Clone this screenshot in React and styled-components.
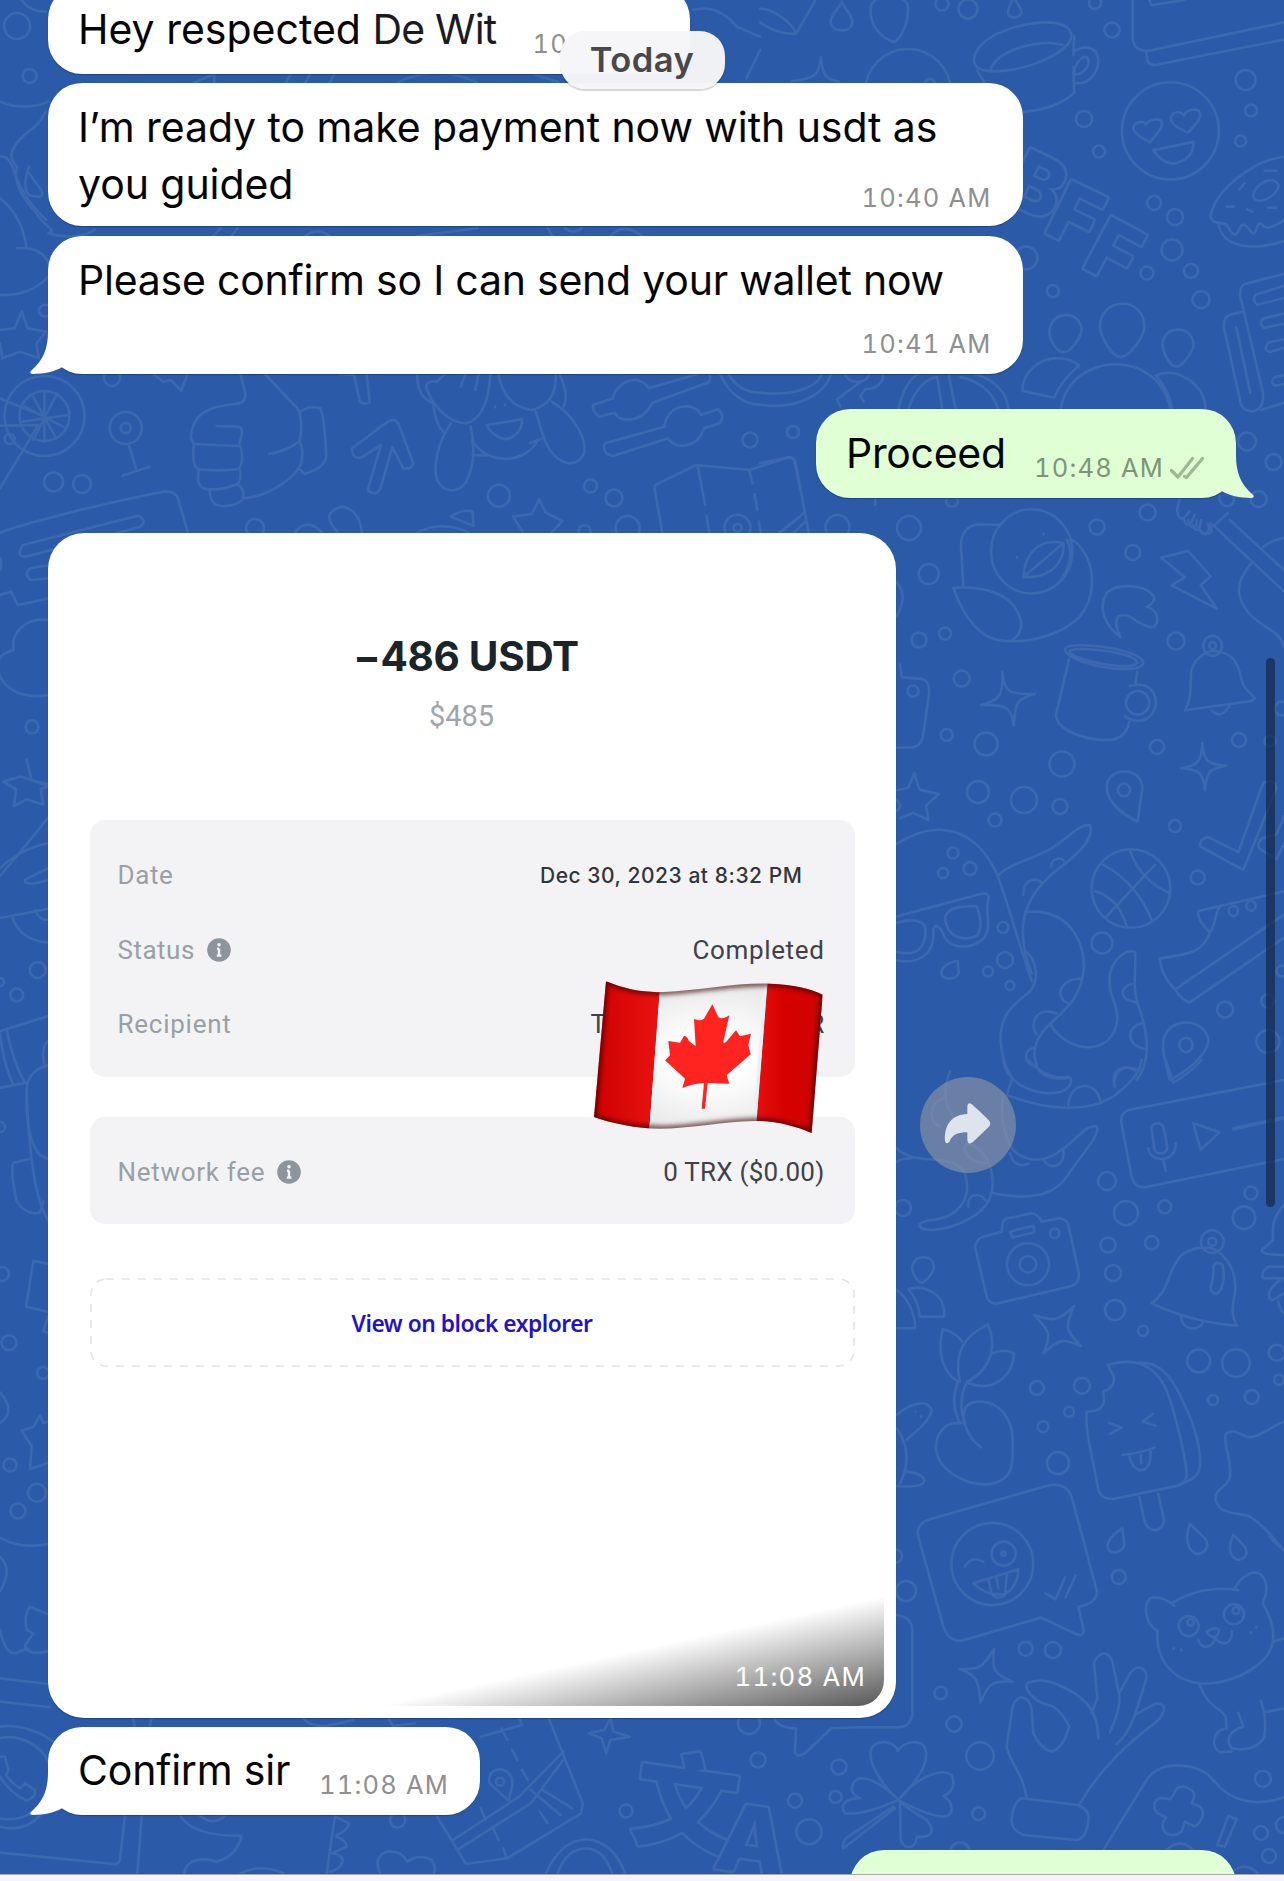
import React from "react";
import styled, { createGlobalStyle } from "styled-components";

const GlobalStyle = createGlobalStyle`
  * { box-sizing: border-box; }
  body { margin: 0; background: #2b5ba8; }
`;

const Screen = styled.div`
  position: relative;
  display: flex;
  flex-direction: column;
  width: 1284px;
  height: 1881px;
  overflow: hidden;
  background: #2b5ba8;
  font-family: Inter, "Liberation Sans", sans-serif;
`;

const WallpaperSvg = styled.svg`
  position: absolute;
  inset: 0;
  fill: none;
  stroke: #3c68b0;
  stroke-width: 2.6px;
  stroke-linecap: round;
  stroke-linejoin: round;
  & path, & ellipse, & circle { vector-effect: non-scaling-stroke; }
  & text { font-weight: 800; fill: #2b5ba8; stroke-width: 5.4px; paint-order: stroke; }
`;

const Thread = styled.main`
  position: relative;
  flex: 1;
  min-height: 0;
  display: flex;
  flex-direction: column;
  align-items: flex-start;
  padding: 0 48px;
  overflow: hidden;
`;

const Bubble = styled.article`
  position: relative;
  flex: none;
  display: grid;
  align-self: ${(p) => (p.$out ? "flex-end" : "flex-start")};
  width: ${(p) => p.$w}px;
  height: ${(p) => p.$h}px;
  margin-top: ${(p) => p.$gap}px;
  padding: 15.6px 31px 14.6px 30px;
  border-radius: 34px;
  background: ${(p) => (p.$out ? "#e1ffd4" : "#fff")};
  box-shadow: 0 1px 1px rgba(10, 25, 55, 0.35);
`;

const Body = styled.div`
  grid-area: 1 / 1;
  display: flex;
  flex-direction: column;
  align-items: flex-start;
  font-size: 41px;
  line-height: 57px;
  letter-spacing: ${(p) => p.$ls || 0}px;
  color: #050505;
  white-space: pre;
`;

const Name = styled.span`
  color: #1c1c1e;
  letter-spacing: -0.8px;
`;

const Stamp = styled.div`
  grid-area: 1 / 1;
  place-self: end;
  display: flex;
  align-items: center;
  gap: 6px;
  font-size: 25.5px;
  line-height: 30px;
  letter-spacing: 1.2px;
  font-variant-numeric: tabular-nums;
  white-space: nowrap;
  color: ${(p) => (p.$out ? "#7d9678" : "#8f8f92")};
`;

const FirstStamp = styled.span`
  position: relative;
  top: 9px;
  margin-left: 36px;
  font-size: 25.5px;
  letter-spacing: 1.2px;
  font-variant-numeric: tabular-nums;
  color: #8f8f92;
`;

const TailSvg = styled.svg`
  position: absolute;
  bottom: 0;
  ${(p) => (p.$out ? "right: -18px; transform: scaleX(-1);" : "left: -18px;")}
`;

const DayPill = styled.div`
  position: absolute;
  top: 31px;
  left: 559.5px;
  width: 165px;
  height: 58px;
  border-radius: 25px;
  background: rgba(246, 246, 248, 0.97);
  box-shadow: 0 2px 1px rgba(0, 0, 0, 0.16);
  color: #48484b;
  font-size: 34.5px;
  font-weight: 600;
  line-height: 58px;
  letter-spacing: 0.5px;
  text-align: center;
`;

const PhotoRow = styled.div`
  flex: none;
  display: flex;
  align-items: center;
  gap: 23.5px;
  margin-top: 35.5px;
`;

const PhotoCard = styled.article`
  position: relative;
  display: flex;
  flex-direction: column;
  align-items: center;
  width: 848px;
  height: 1184.5px;
  padding: 99px 41px 0;
  border-radius: 36px;
  background: #fff;
  box-shadow: 0 1px 1px rgba(10, 25, 55, 0.35);
`;

const Amount = styled.h1`
  margin: 0 12px 0 0;
  color: #1b2428;
  font-size: 40.5px;
  font-weight: 650;
  line-height: 50px;
  letter-spacing: -0.3px;
`;

const Fiat = styled.div`
  margin: 17px 21px 87px 0;
  color: #a0a5ab;
  font-family: Roboto, sans-serif;
  font-size: 29px;
  line-height: 34px;
`;

const Panel = styled.section`
  width: 765px;
  height: ${(p) => p.$h}px;
  margin-bottom: ${(p) => p.$after}px;
  padding: 18px 30px 0 28px;
  border-radius: 15px;
  background: #f3f3f5;
  font-family: Roboto, sans-serif;
  font-size: 26px;
`;

const Row = styled.div`
  display: flex;
  align-items: center;
  justify-content: space-between;
  height: 74.5px;
`;

const Label = styled.span`
  display: flex;
  align-items: center;
  gap: 12px;
  color: #9a9fa6;
  letter-spacing: ${(p) => p.$ls || 0.6}px;
`;

const Value = styled.span`
  color: #3e4247;
  letter-spacing: ${(p) => p.$ls || 0.25}px;
`;

const DateValue = styled.span`
  margin-right: 22px;
  color: #333538;
  font-family: Inter, sans-serif;
  font-size: 21px;
  font-weight: 500;
  letter-spacing: 0.55px;
`;

const Address = styled(Value)`
  display: flex;
  justify-content: space-between;
  width: 234px;
`;

const ExplorerLink = styled.div`
  position: relative;
  width: 765px;
  height: 89px;
  color: #2413c2;
  font-family: "Noto Sans", Roboto, sans-serif;
  font-size: 22.8px;
  font-weight: 600;
  line-height: 91px;
  letter-spacing: -0.5px;
  text-align: center;
`;

const DashedOutline = styled.svg`
  position: absolute;
  inset: 0;
`;

const FlagSvg = styled.svg`
  position: absolute;
  left: 542px;
  top: 443.5px;
`;

const PhotoShade = styled.div`
  position: absolute;
  right: 12px;
  bottom: 12px;
  width: 506px;
  height: 110px;
  padding: 66px 18px 0 0;
  border-bottom-right-radius: 26px;
  background: linear-gradient(to bottom right, transparent 50%, rgba(0, 0, 0, 0.24) 68%, rgba(0, 0, 0, 0.66) 100%);
  color: #fff;
  font-size: 25.8px;
  line-height: 30px;
  letter-spacing: 1.2px;
  font-variant-numeric: tabular-nums;
  text-align: right;
`;

const ForwardButton = styled.button`
  display: flex;
  width: 96px;
  height: 96px;
  padding: 0;
  border: 0;
  border-radius: 50%;
  background: rgba(143, 150, 165, 0.62);
`;

const ScrollThumb = styled.div`
  position: absolute;
  top: 658px;
  right: 9px;
  width: 9px;
  height: 549px;
  border-radius: 5px;
  background: rgba(17, 30, 60, 0.62);
`;

const BottomBar = styled.footer`
  position: relative;
  flex: none;
  height: 7.5px;
  border-top: 1px solid #a9a8a6;
  background: #f5f5f8;
`;

const InfoIcon = () => (
  <svg width="24" height="24" viewBox="0 0 24 24">
    <circle cx="12" cy="12" r="11.8" fill="#8c949c" />
    <path d="M12 10.5v7M10 10.8h2M9.8 17.6h4.6" stroke="#f3f3f5" strokeWidth="2.4" />
    <circle cx="12" cy="6.7" r="1.8" fill="#f3f3f5" />
  </svg>
);

const Tail = ({ out }) => (
  <TailSvg $out={out} width="60" height="43" viewBox="91 338 180 129">
    <path
      fill={out ? "#e1ffd4" : "#fff"}
      d="M145 338C145 390 132 425 93 459Q89 466 98 467C135 467 165 460 187 447L210 400V338Z"
    />
  </TailSvg>
);

const Ticks = () => (
  <svg width="35" height="24" viewBox="0 0 35 24" fill="none" stroke="#9cb894" strokeWidth="3.2">
    <path d="M1.5 14.5 8 21 22.500 2.500M14.500 20.500l2 1L32.500 2.500" strokeLinecap="round" strokeLinejoin="round" />
  </svg>
);

const Message = ({ out, w, h, gap, ls, time, tail, lines, children }) => (
  <Bubble $out={out} $w={w} $h={h} $gap={gap}>
    {tail && <Tail out={out} />}
    <Body $ls={ls}>
      {lines ? lines.map((line) => <div key={line}>{line}</div>) : <div>{children}</div>}
    </Body>
    {time && (
      <Stamp $out={out}>
        <span>{time}</span>
        {out && <Ticks />}
      </Stamp>
    )}
  </Bubble>
);

const FLAG =
  "M198 543C250 565 310 578 370 575C480 570 600 545 690 550C760 552 810 565 848 583L815 998C760 975 700 960 645 962C540 965 450 985 360 985C290 985 220 970 162 950Z";

const Flag = () => (
  <FlagSvg width="240" height="162" viewBox="150 530 720 486">
    <defs>
      <clipPath id="flagShape"><path d={FLAG} /></clipPath>
      <filter id="soft"><feGaussianBlur stdDeviation="8" /></filter>
      <linearGradient id="redL" x1="0" x2="1"><stop offset="0" stopColor="#cd0000" /><stop offset="1" stopColor="#ea1212" /></linearGradient>
      <linearGradient id="redR" x1="0" x2="1"><stop offset="0" stopColor="#e41010" /><stop offset=".4" stopColor="#d70000" /><stop offset="1" stopColor="#cf0505" /></linearGradient>
      <radialGradient id="cloth"><stop offset=".3" stopColor="#fff" /><stop offset="1" stopColor="#e6e6e8" /></radialGradient>
    </defs>
    <g clipPath="url(#flagShape)">
      <rect x="150" y="530" width="720" height="486" fill="url(#cloth)" />
      <path d="M150 530H362L327 1000H150Z" fill="url(#redL)" />
      <path d="M684 530H870V1010H646Z" fill="url(#redR)" />
      <path d="M366 560L332 990M677 545L643 975" stroke="#dff4f6" strokeWidth="9" />
      <path d={FLAG} fill="none" stroke="#3a0808" strokeOpacity=".75" strokeWidth="16" filter="url(#soft)" />
    </g>
    <path
      fill="#ff2420"
      d="M517 612L535 650Q545 660 568 645L550 725Q550 732 558 725L588 690L600 708L633 700L625 735L632 762L560 825L568 850Q540 850 503 848L495 925L485 925L492 848Q460 850 427 863L435 835L375 780L390 765L385 722L420 727L432 707Q440 705 447 722L467 738L462 655Q480 665 492 655Z"
    />
  </FlagSvg>
);

const DOTS = [
  [942, 4, 6.5], [968, 9, 9.5], [1095, 3, 6], [1112, 30, 7.5], [1245.6, 80, 10], [1251, 110.5, 6], [1084, 119, 8],
  [1099, 151.5, 6], [1240.6, 141, 5.5], [1154, 203, 7], [1175, 217, 8], [1172, 250, 10.5], [1147, 273, 6.5],
  [1191, 271, 7], [1201, 299.6, 8.5], [1053, 291, 6], [1026, 258, 11.5], [1247, 441.5, 9], [1273.6, 462, 8],
  [1258.6, 499, 8], [1147.6, 512.5, 8], [1097, 527, 7.5], [909, 528, 12], [837.5, 527, 12], [793, 432, 6],
  [952, 501, 6], [928.7, 574, 10], [1132.7, 552.5, 7.5], [919, 640, 7.5], [945, 633.6, 6], [1176, 641, 8.5],
  [961.7, 678.6, 8], [946.7, 735, 6], [986, 744, 11.5], [1062, 764, 12.5], [1157, 747, 7], [1239, 740, 7],
  [978, 792, 11], [1024, 800, 13], [1060, 806.5, 7.5], [995, 820, 6.5], [1175, 826, 6], [1197.7, 877.5, 7],
  [953, 853, 5.5], [943, 873, 5], [970, 868.6, 6.5], [1003, 927.5, 5.5], [1005, 960, 8], [988, 971.5, 5],
  [1010, 985.5, 4.5], [1102, 943, 10.5], [1225, 1009.6, 8], [1268, 1041.5, 11.5], [1267.7, 1001, 6.5],
  [1281.7, 708.6, 7], [1270, 741, 5.5], [1282, 971, 5.5], [913, 691, 5.5], [1107, 1181, 9], [1126, 1213, 12],
  [1164.7, 1206.7, 6.5], [1244, 1217.7, 11.3], [1251, 1193, 6.5], [1108, 1245, 7.5], [1151.7, 1242.7, 6.7],
  [1113, 1273, 8], [1115, 1310, 10], [1143, 1330.7, 5], [1198.7, 1361, 11.5], [1236, 1363, 13.7],
  [1276.7, 1352.7, 8], [1279, 1379.7, 5], [1213, 1400, 5], [1251.7, 1397, 7], [1037, 1388, 7], [1082, 1385.7, 8],
  [1069, 1411.7, 5], [1043, 1426.7, 5.5], [1058, 1463, 11], [903, 1208, 8], [1118.7, 1577, 7], [906, 1591, 10],
  [895, 1556, 7], [1025.7, 1648.7, 7], [1053, 1650, 8], [940.7, 1693, 6.3], [954, 1724, 7.7], [980, 1756, 13.7],
  [978.7, 1813.7, 6.3], [960, 1852, 9.5], [1263, 1778.7, 8], [1261, 1833, 7], [1269, 1856, 7], [1284, 1825, 8],
  [626, 1811, 6.5], [758, 1760, 7.5], [839, 1767, 7.5], [795, 1800.7, 7], [809, 1831.7, 12.5], [835.6, 1797, 6],
  [749, 1723, 11], [397.7, 1820, 7.5], [499, 495.7, 11], [590.5, 486, 6.5], [614, 498, 8.5], [750, 440, 7.5],
  [627.6, 528, 12], [584.5, 531, 6], [255, 528, 9], [112, 378, 8], [53.6, 482, 9.5], [82, 484, 9], [9.7, 439, 5],
  [32, 726.7, 6.5], [37.7, 970, 8], [16.7, 995, 6.5], [0, 982, 4], [0, 1127, 5], [2, 1274, 7], [9, 1342.7, 7.5],
  [43, 1373, 6], [10, 1465, 6.5], [37, 1492.7, 9], [18, 1511, 7.5], [17, 26, 13], [29.6, 76, 7], [45, 310.7, 6],
  [737.5, 527.7, 13], [737.5, 527.7, 4], [125.7, 428, 16], [125.7, 428, 5], [44.5, 416, 40], [44.5, 416, 25],
  [500, 1781.7, 4], [908, 92, 43], [930, 84, 5],
];

const TOP_RIGHT = [
  "M245 5C230 35 208 45 212 68C218 95 272 95 276 68C280 45 255 30 245 5",
  "M0 25C40 25 100 70 108 98M0 65C30 85 70 100 108 98L165 2",
  "M400 122C360 110 325 70 332 20C335 -20 440 -20 443 20C445 70 420 115 400 122Z",
  "M760 -10C745 20 738 35 745 45C755 55 775 52 782 38C786 25 765 10 760 -10",
  "M182 165C187 215 195 232 235 236M182 165C178 215 165 230 95 235",
  "M640 175C645 110 760 65 870 65C930 70 945 100 920 130C870 180 760 210 690 207C655 205 640 195 640 175Z",
  "M690 205C700 150 830 110 905 130M650 205L672 240M940 105L938 160M938 195L940 270C900 305 850 320 785 325",
  "M940 150C975 125 1015 140 1012 180C1010 215 980 250 938 240M940 210C945 180 965 160 980 168C990 185 970 220 940 215",
  "M1115 0V110Q1118 148 1160 148L1568 65M1155 150L1160 180Q1170 190 1185 188L1568 115M1165 0L1170 15L1270 0",
  "M1167 413C1140 400 1115 385 1117 370C1122 350 1150 350 1155 362C1165 345 1200 340 1203 358C1205 375 1180 395 1167 413Z",
  "M1280 385C1250 372 1225 355 1230 340C1238 322 1262 322 1268 337C1275 318 1312 310 1317 330C1320 350 1295 370 1280 385Z",
  "M1177 436L1297 412C1298 440 1285 465 1240 475C1210 475 1190 455 1177 436Z",
  "M1568 455C1480 465 1360 550 1348 630C1355 650 1375 645 1395 652C1405 665 1410 685 1425 680C1435 670 1435 655 1445 652C1465 655 1465 680 1478 678C1490 665 1485 645 1500 650C1515 670 1530 660 1568 640M1372 650C1380 700 1440 740 1568 700",
  "M1475 570C1480 530 1540 505 1552 540C1545 570 1490 600 1475 570M1435 550L1450 532M1395 600H1418M1457 608L1473 614M1510 496H1545M1520 603H1545",
  "M915 915C870 915 860 960 870 985C885 1015 900 1025 912 1023C930 1020 960 980 962 960C962 935 945 913 915 915Z",
  "M1085 882C1030 882 1010 930 1020 965C1035 1005 1060 1038 1080 1037C1105 1035 1150 980 1150 945C1148 905 1120 882 1085 882Z",
  "M1250 957C1210 957 1198 995 1208 1020C1220 1050 1235 1065 1247 1064C1265 1062 1297 1020 1297 1000C1295 970 1275 957 1250 957Z",
  "M785 1135C785 1060 880 1010 955 1060C920 1090 895 1120 880 1155ZM900 1186C930 1020 1190 1010 1228 1186M1185 1090C1260 1060 1335 1130 1333 1186M1185 1090C1210 1120 1228 1150 1233 1186",
  "M1568 795L1450 825Q1435 830 1437 860L1505 1140Q1510 1190 1470 1195C1445 1190 1440 1180 1437 1165L1388 950Q1385 915 1415 912L1447 905M1425 950L1467 1140",
  "M1568 830L1485 855Q1470 870 1488 885L1568 865M1568 910L1505 925Q1490 940 1508 952L1568 940M1568 985L1520 995Q1505 1015 1525 1022L1568 1010M1568 1090L1540 1095Q1525 1110 1540 1120L1568 1115M1500 1190L1568 1170",
  "M0 1140C90 1150 170 1130 185 1085M0 1175C100 1190 195 1150 212 1085M-120 1085C-90 1150 -40 1175 0 1175M-95 1085C-70 1130 -30 1140 0 1140",
  "M415 1186C430 1120 455 1095 475 1085M445 1186C460 1140 490 1100 530 1095L545 1186M565 1090L585 1186M600 1095C670 1110 700 1150 712 1186M640 1085C700 1100 740 1140 743 1186",
  "M310 1165L300 1150L315 1130C350 1130 370 1110 368 1088M325 1088C325 1110 270 1120 255 1088M300 1110C270 1130 260 1140 230 1160L240 1180",
  "M0 1345L85 1328Q105 1325 108 1350L145 1545M130 1490L60 1548M135 1515L100 1548M345 1445V1465",
  "M1255 1450L1248 1480Q1250 1510 1268 1505L1285 1485M1270 1510Q1275 1530 1290 1520L1300 1495M1295 1525Q1300 1545 1315 1535L1320 1510M1318 1540Q1325 1560 1350 1545V1520M1375 1440C1370 1480 1425 1480 1418 1440M1360 1525L1400 1490",
];

const MIDDLE_RIGHT = [
  "M357 14L300 12Q245 15 243 70L250 187M560 55C580 90 570 130 545 165",
  "M575 55C640 90 660 200 600 270C550 320 450 345 370 338C300 335 250 270 220 190C300 185 400 200 422 280C428 310 415 325 395 338",
  "M430 160C435 90 480 50 550 65C555 110 520 165 430 160M550 65L430 160M411 104V106M491 38V40",
  "M722 328C680 300 650 250 680 205C710 175 800 180 822 215C825 235 805 240 800 243C840 250 840 300 815 300C770 295 750 255 715 270C700 290 715 315 722 328Z",
  "M843 105L925 87L992 158L962 182L1010 248L875 183L915 160Z",
  "M555 362C560 335 785 360 790 400C785 440 560 405 555 362ZM568 368C580 350 770 370 772 400C760 425 580 395 568 368",
  "M567 390L528 545C530 600 650 620 700 615Q740 605 748 565M772 425L765 463M750 465C800 450 830 480 828 515C820 560 780 575 735 550",
  "M915 533C935 500 930 480 933 430C935 400 965 370 1000 367C1060 370 1075 400 1085 450C1095 480 1115 485 1125 500L1115 507ZM995 533Q1020 560 1048 522",
  "M367 425C372 480 385 490 465 487C410 500 405 510 402 577C395 530 385 515 303 518C360 505 370 490 367 425Z",
  "M967 625C970 670 980 685 1040 688C990 695 980 700 975 757C970 710 960 697 903 695C955 688 965 675 967 625Z",
  "M773 845C720 820 680 790 680 745C685 690 785 690 787 750Z",
  "M103 708L118 755L177 767L138 800L145 840L100 820L60 835M103 708L85 750L50 757M50 785Q70 800 50 815",
  "M50 907C180 830 290 870 350 990C380 1060 410 1170 455 1290M440 1210C475 1240 475 1290 450 1320C380 1370 360 1400 362 1460C365 1510 380 1540 400 1568",
  "M355 995C400 955 480 945 530 910C570 885 600 850 630 855C645 890 590 940 530 980C480 1020 440 1060 430 1130C425 1180 435 1220 455 1270",
  "M435 1098C560 1085 610 1170 612 1250C605 1350 540 1380 500 1420C460 1460 450 1500 480 1545Q510 1570 570 1562M513 970C515 945 550 940 555 962M430 1050C430 1000 475 1000 487 1018",
  "M605 1285C540 1280 520 1340 568 1355M530 1382C470 1360 445 1410 470 1440M465 1478C430 1480 430 1520 460 1528",
  "M510 1412C570 1500 700 1500 712 1400C715 1350 680 1330 690 1270C700 1230 740 1200 765 1210C770 1260 755 1310 775 1360C810 1450 810 1520 770 1568M755 1300C720 1305 715 1345 768 1350M790 1408C740 1415 735 1470 792 1480M705 1568C710 1530 740 1530 768 1538",
  "M50 1110L310 1045Q330 1045 325 1065C315 1090 330 1110 322 1150C310 1200 220 1210 195 1170C185 1140 160 1125 160 1150C165 1220 110 1245 50 1233",
  "M195 1115C200 1085 240 1080 290 1082C305 1110 305 1150 290 1165C250 1180 200 1170 195 1115ZM50 1128C100 1115 135 1120 137 1150C135 1210 100 1220 50 1210",
  "M233 1235C200 1240 180 1255 185 1275C200 1290 235 1285 236 1265Z",
  "M670 965C740 1000 790 1060 815 1120M825 965L680 1110M750 925C770 980 810 1020 865 1043M645 1040C690 1050 725 1085 740 1140",
  "M1150 735L1075 930L985 888Q955 895 962 915L1090 980L1190 750Q1185 725 1150 735M1212 830L1190 880L1150 890Q1130 900 1138 920L1190 950L1212 905",
  "M955 1095L1212 1040M955 1095Q950 1120 990 1155C1010 1130 1005 1090 1020 1085M990 1155C970 1210 930 1215 840 1228C840 1260 860 1290 885 1315L1212 1105M885 1315Q910 1350 930 1350L1212 1170",
  "M870 1568C850 1500 840 1460 860 1435C890 1390 980 1400 985 1460C980 1500 920 1545 870 1568",
  "M1000 15L1212 200M1050 0L1212 140M925 0C930 30 955 25 950 0M955 20C965 50 995 40 985 10M1115 120C1060 180 1070 220 1110 265C1160 310 1200 310 1212 355M1150 75Q1180 55 1212 50",
  "M60 405L65 440L125 445Q148 450 148 480L130 600Q125 637 90 637H50M50 175Q85 210 50 270",
];

const LOWER_RIGHT = [
  "M370 0C380 80 480 110 545 95C580 80 580 50 560 50C520 60 470 30 445 0M565 135C570 60 655 60 662 130",
  "M395 60L380 105C500 150 620 160 700 110C750 70 780 40 785 0M705 80C690 30 730 10 765 30",
  "M340 400C440 420 520 410 560 350C600 290 665 220 650 200C620 190 590 240 550 265C500 310 440 310 400 270C370 230 360 160 370 100M390 280Q400 325 445 312M490 300C520 335 555 315 550 270",
  "M50 265Q80 295 150 298M50 305Q70 295 95 295M255 340C280 430 220 470 170 478Q115 485 118 498C130 515 180 515 240 490C310 460 350 420 335 340M265 440C260 400 300 395 318 422",
  "M210 35C190 80 190 130 220 170M190 115C150 130 140 180 180 200M150 298C220 300 245 320 255 340M335 340C330 300 300 260 265 250C240 260 260 310 320 310",
  "M1212 60L745 150Q720 160 724 190L755 350Q765 385 795 382L1212 297M857 0L880 68Q930 40 965 0",
  "M815 210Q810 190 835 190Q850 192 852 210L862 260Q862 280 840 280Q825 280 823 265ZM805 265C810 310 890 310 887 250M850 300L857 332M940 190L1018 217L962 270ZM1060 205L1212 172M1062 208L1212 175",
  "M285 560Q290 535 310 530L365 515L368 490Q370 478 385 475L455 460Q470 458 485 485L540 475Q560 478 565 495L597 640Q598 670 575 678L355 730Q330 735 320 710ZM390 515L460 497L463 517L397 533Z",
  "M130 592C100 592 92 620 100 640Q115 670 128 668Q150 655 162 625C160 600 150 592 130 592ZM85 688Q110 680 130 685C180 700 195 730 193 770L120 770Q115 720 85 688M50 690C80 710 107 760 105 805H50",
  "M582 738C550 810 560 810 603 858C550 835 540 835 490 880C515 825 510 815 463 765C520 785 535 785 582 738Z",
  "M815 730C870 690 860 640 900 590C930 560 990 555 1015 575C1060 610 1070 660 1065 700C1055 750 1055 770 1070 797C980 790 900 770 815 730M1000 620Q1010 600 1028 615C1035 650 1030 690 1010 702Q990 700 993 680C1002 655 1000 640 1000 620ZM903 768C905 815 960 815 970 785",
  "M235 965C190 940 170 880 188 808Q225 815 247 845M240 965C220 880 250 830 323 793C350 850 340 920 265 965M335 880Q380 865 402 880C400 940 350 1000 265 970",
  "M235 965C215 1010 220 1050 240 1090M262 965C240 1000 240 1050 255 1095Q270 1140 303 1162M245 1090C190 1080 165 1130 168 1170C180 1240 270 1280 330 1272C400 1260 400 1220 398 1130C390 1050 330 1010 270 1030C250 1040 248 1070 255 1090",
  "M50 1065C90 1030 140 1015 155 1050C150 1085 100 1120 80 1140M50 1105C90 1160 85 1220 60 1270M75 1235Q130 1240 133 1262Q130 1285 50 1278M107 1055V1056M123 1070V1071",
  "M683 915C800 880 850 950 870 1020C900 1120 920 1200 920 1250Q915 1275 880 1280L700 1317Q665 1318 655 1290C640 1200 615 1120 620 1055Q670 1055 672 1020L670 995Q710 980 700 945Q690 930 683 915",
  "M780 908C870 905 900 1010 930 1070C960 1150 970 1220 950 1245Q935 1262 910 1268M687 1088L725 1103L690 1122M817 1062L788 1085L827 1097M727 1185Q780 1180 823 1163M748 1185C755 1245 815 1250 812 1175M782 1185L784 1210M778 1312L793 1380C800 1420 850 1420 852 1380L835 1302",
  "M1212 1085C1180 1095 1130 1140 1100 1130C1070 1115 1050 1105 1037 1125C1030 1160 1055 1190 1050 1250C1040 1290 1005 1280 1007 1320C1020 1370 1080 1355 1110 1370C1160 1400 1180 1440 1212 1470",
  "M1212 435C1180 470 1175 500 1180 540L1145 570Q1145 585 1212 585M1212 620H1165Q1140 640 1150 655L1212 655M1200 660Q1150 700 1175 722L1212 700M1195 725Q1200 750 1212 760",
];

const BOTTOM_RIGHT = [
  "M215 236Q165 250 175 290L250 560Q265 605 305 602L543 533L650 583Q675 590 670 565L655 500Q715 490 710 450L635 170Q620 130 570 135Z",
  "M315 380Q335 345 370 365M340 430L475 388C475 430 450 455 435 462Q380 470 340 430M385 420L395 460Q410 485 435 465L440 405M410 415L415 445M557 460L587 478L615 412M617 472L647 406",
  "M787 265C745 290 735 320 748 332C770 348 795 325 793 310ZM990 252C975 290 980 330 1010 342C1040 340 1050 315 1035 295ZM1120 285C1105 320 1105 350 1135 360C1160 355 1168 335 1150 315Z",
  "M893 573C850 550 850 480 875 473Q910 468 942 497M935 490C1000 450 1070 440 1135 450M1125 445C1140 410 1180 385 1205 405C1225 430 1222 460 1208 490C1250 560 1250 620 1210 660C1160 710 1080 735 1020 730C930 720 885 650 893 573",
  "M1040 575Q1060 560 1078 568Q1075 590 1062 592Q1045 588 1040 575M1015 600C1025 635 1065 620 1065 592C1080 620 1120 615 1115 573M941 625V626M964 629V630M1173 577V578M1189 562V563",
  "M1020 735C1040 800 1090 810 1097 830L1100 865C1060 870 1050 920 1080 937L1115 935M1135 818L1150 860C1110 870 1095 900 1115 925C1160 935 1200 920 1213 890C1220 850 1215 820 1203 783M1215 817L1272 805M1240 605L1272 595",
  "M402 627C395 690 400 700 457 725C395 722 385 730 362 787C355 720 355 710 300 687C360 690 370 680 402 627Z",
  "M500 1075C490 1000 450 970 440 920L458 800C470 760 510 765 515 810L520 880Q540 925 575 935Q610 925 628 860C610 825 590 800 565 795C530 790 490 750 502 730C560 700 650 760 680 790Q715 830 715 895",
  "M695 820L712 775L702 670C715 630 755 630 760 680L777 760Q785 800 750 877M777 760L810 700C840 665 865 690 858 720L825 825Q800 890 770 912M825 825L885 792C920 785 920 815 890 845C790 920 720 990 660 1090",
  "M485 1075L655 1095Q690 1110 685 1140Q680 1195 650 1200L490 1185Q455 1170 455 1140Q460 1085 485 1075",
  "M730 1230L860 1020C900 960 990 970 1040 1000C1080 1040 1100 1080 1190 1087Q1240 1085 1272 1072M1105 1128L1130 1138L1095 1220L1072 1215ZM920 1230Q960 1190 1000 1230M1125 1290Q1160 1265 1195 1302",
  "M950 1045Q970 1035 985 1045Q1005 1055 1003 1070L995 1090L1020 1100Q1035 1115 1025 1135Q1015 1160 1000 1158L975 1145L965 1175Q945 1190 925 1183Q905 1175 908 1150L918 1132L890 1118Q875 1095 890 1080Q900 1070 930 1078L940 1065Z",
  "M108 525Q155 530 157 570V825Q150 860 120 862H0",
  "M115 1080C60 1030 20 960 35 925C55 895 105 905 113 933C135 900 190 895 198 935C205 980 160 1035 115 1080C160 1020 240 980 275 1005C290 1040 270 1060 250 1068C285 1090 280 1125 255 1130C210 1130 160 1105 115 1080",
  "M115 1080C80 1040 0 990 -20 1030C-35 1060 -10 1070 0 1075C-50 1075 -60 1100 -45 1120C0 1125 70 1100 115 1080M120 1085L122 1200C135 1235 170 1225 170 1190C220 1195 225 1170 200 1140Q150 1110 120 1085M105 1105L-50 1225Q-55 1205 -35 1190L100 1100",
  "M1272 330Q1240 305 1230 290",
];

const UPPER_MIDDLE = [
  "M153 42L165 100Q168 130 140 132C60 140 30 170 27 235L35 250C30 310 40 325 48 328C40 370 50 388 75 388C75 430 90 440 120 438C150 435 165 415 160 405Q160 380 145 375C155 360 155 330 148 327C160 310 160 280 150 250Q165 200 145 200L92 198",
  "M35 252L150 258M48 328Q100 335 148 327M75 388Q110 390 145 372M158 415C230 410 290 350 305 315Q315 270 302 245Q265 275 225 282M215 42L300 150Q312 190 302 245M305 155Q325 135 355 145Q365 170 370 290Q365 325 315 342L305 330",
  "M400 42L440 45L455 125Q465 135 480 128L472 42M435 265L520 190Q540 170 552 190L590 310Q585 330 565 325L537 262L507 385Q495 412 475 390L508 255L460 292Q435 300 435 265",
  "M600 42Q598 110 640 130L625 90Q615 60 650 65L670 42M640 130Q645 190 665 215M640 125Q680 190 725 190Q780 170 785 42M805 42Q820 140 890 150Q955 130 950 42M960 42Q985 110 970 140M722 42L710 80M755 42L747 90",
  "M685 190C650 250 640 320 650 360C670 405 715 400 730 350C745 300 745 250 735 200M940 125C990 160 1030 230 1022 280C1000 330 960 310 935 270C910 220 910 180 898 152M738 240C770 310 870 320 905 240M775 195L865 178Q865 225 825 238Q795 235 775 195M740 285L775 287M885 250L915 235M797 140V142M822 134V136",
  "M1340 45Q1345 70 1325 72L1195 128C1170 190 1110 190 1100 158L1060 170Q1040 150 1045 135L1095 115C1105 60 1165 40 1185 85L1310 42",
  "M1360 148Q1380 165 1365 190L1325 205C1310 265 1250 270 1235 235L1095 288Q1065 280 1075 250L1225 200C1230 135 1300 120 1318 165Z",
  "M1220 518L1200 385Q1200 375 1210 370L1305 315L1440 330L1540 292Q1550 290 1555 310L1568 385M1310 320L1328 435M1332 468L1338 515M1440 332L1448 370M1453 402L1460 450M1464 485L1468 518M1515 518L1568 470",
  "M908 418L925 458L967 483L940 518M908 418L890 462L842 470L868 518M600 518Q660 480 730 518M685 470Q715 445 740 455L742 498ZM400 518Q370 480 380 460Q395 440 415 440Q455 455 460 518M290 518Q320 470 360 518",
];

const UPPER_LEFT = [
  "M0 115L88 170M0 197L75 195L0 385M87 95V245M48 140L130 205M45 185L132 165M65 240L112 100M110 235L65 110M253 258L268 333M240 347L293 320",
  "M0 518C50 490 200 430 320 395Q345 392 350 420L368 518M45 555L270 467Q290 480 275 500L50 590Q30 590 45 555M97 615L60 625Q45 640 60 660L97 655M0 705L22 695L35 735L97 715",
  "M97 780C50 770 20 820 27 870C0 880 -10 900 0 950C20 1005 60 1015 97 1005M0 595Q5 610 0 630M300 42L320 65L335 60L355 92L368 42",
];

const TOP_LEFT = [
  "M0 305Q50 335 100 305M95 335C70 400 50 390 30 440Q15 470 35 500C25 550 50 600 75 640C90 680 120 690 100 700C140 720 180 705 195 690M60 500Q45 560 60 585Q95 600 85 570L60 520",
  "M0 470Q20 465 30 520Q50 600 95 660M0 595C40 640 50 700 55 745H35M55 745C90 750 110 790 100 830Q60 890 0 885M45 0Q60 35 95 35",
  "M45 935L57 985L95 995L75 1030L80 1075L42 1055L5 1075M45 935L30 985L0 990M0 1030L5 1075",
  "M442 222L400 248M442 222V248M600 222L590 248M640 222L630 248M690 222L680 248M820 248Q900 190 985 248M1430 30Q1480 10 1520 80L1568 110M1540 235L1568 150M1100 222L1150 245",
  "M455 685L440 708M490 685L478 708M630 708Q655 680 680 708M860 708L985 685M1130 685L1140 708M1165 685Q1185 705 1200 685M1260 708Q1285 665 1325 708",
];

const LEFT_EDGE = [
  "M80 313L95 340L145 345M145 348L122 352L130 372L80 365L42 374L48 352L10 342L62 335ZM0 465Q70 430 145 388M0 455Q60 430 145 422M0 520L145 508M145 455L75 470Q70 480 145 470M35 517Q60 550 145 552M105 510Q120 525 145 522",
  "M0 668L145 648M20 665Q40 710 75 735M0 672Q10 710 40 738M0 742L80 735M145 712Q80 720 80 745C75 800 100 820 120 830L145 835M145 680Q120 690 135 715M90 835L40 840Q30 850 50 890Q80 910 120 905L130 890M80 745Q90 880 145 915",
  "M145 972L100 968L78 1028L145 1035M145 1040L130 1060L145 1062M65 1190L100 1185L120 1170L130 1180L145 1178M65 1190L95 1210L90 1240L145 1232M0 1330Q60 1345 145 1338M0 1355Q40 1370 0 1400M0 1140Q50 1165 0 1180",
  "M145 1430L90 1420Q70 1430 80 1450L100 1455L75 1470Q80 1485 145 1478M0 1450Q20 1490 60 1478L85 1475",
];

const BOTTOM_LEFT = [
  "M0 235C60 220 130 260 145 310M0 200C60 190 130 220 158 245M0 500Q70 520 120 467M0 475Q50 485 92 460M0 290L15 290L25 330L18 345Q35 370 60 385L75 370L105 390Q110 410 80 422Q30 400 0 350",
  "M0 55L145 72M0 125L150 142M375 467L360 600Q355 615 340 612L0 578M425 467L412 640M400 175L403 198M455 175L450 198M540 467Q580 530 725 527Q710 590 650 605C600 590 560 600 552 640M600 467Q640 500 675 467M722 640Q780 610 850 640",
  "M1005 467L980 640M1005 470L1048 490Q1040 515 1010 525M1010 530Q1040 540 1040 560L995 580Q1030 585 1028 605Q1020 630 990 635M1140 640Q1120 590 1160 575Q1205 570 1222 605Q1260 580 1295 600Q1310 620 1302 640M910 175Q930 200 980 198L1060 180M1165 175L1180 198L1245 190",
];

const BOTTOM_MIDDLE = [
  "M130 768L180 912L250 895L375 760L378 730L320 474M205 530L275 495L270 474M240 505L250 540M258 570L267 600M275 630L285 660M158 840L270 710L345 575M165 870L290 730L345 600M290 690L340 765M310 690L360 745M205 745L213 780M225 800L235 840M243 865L248 890M305 755L318 790",
  "M252 722L220 670Q215 630 240 628Q262 640 258 680ZM425 474L430 515L458 530L425 540L418 580L410 535L388 520L415 510ZM315 942Q340 840 385 838Q430 845 450 942M335 942Q350 865 385 865Q415 870 428 942M703 474Q710 505 740 505L738 575Q740 595 755 580L800 505L848 502",
];

const Doodles = ({ at, scale, paths, children }) => (
  <g transform={`translate(${at}) scale(${scale})`}>
    {paths.map((d, i) => <path key={i} d={d} />)}
    {children}
  </g>
);

const Wallpaper = () => (
  <WallpaperSvg width="1284" height="1881" viewBox="0 0 1284 1881" aria-hidden="true">
    {DOTS.map(([x, y, r], i) => <circle key={i} cx={x} cy={y} r={r} />)}
    <Doodles at="760 0" scale=".3342 .3444" paths={TOP_RIGHT}>
      <ellipse cx="1228" cy="380" rx="145" ry="141" />
    </Doodles>
    <Doodles at="880 520" scale=".3333 .3571" paths={MIDDLE_RIGHT}>
      <ellipse cx="455" cy="88" rx="122" ry="118" />
      <ellipse cx="773" cy="512" rx="35" ry="33" />
      <circle cx="998" cy="352" r="28" />
      <circle cx="998" cy="352" r="10" />
      <circle cx="732" cy="756" r="18" />
      <ellipse cx="753" cy="1032" rx="118" ry="110" />
      <circle cx="1060" cy="1095" r="14" />
      <circle cx="1113" cy="1080" r="14" />
      <circle cx="918" cy="1470" r="20" />
    </Doodles>
    <Doodles at="880 1060" scale=".3333" paths={LOWER_RIGHT}>
      <circle cx="444" cy="613" r="63" />
      <circle cx="444" cy="613" r="25" />
      <circle cx="524" cy="520" r="14" />
      <circle cx="997" cy="545" r="34" />
      <circle cx="997" cy="545" r="12" />
    </Doodles>
    <Doodles at="860 1440" scale=".3333" paths={BOTTOM_RIGHT}>
      <circle cx="397" cy="372" r="123" />
      <circle cx="431" cy="341" r="36" />
      <circle cx="431" cy="341" r="6" />
      <circle cx="986" cy="558" r="30" />
      <circle cx="1122" cy="523" r="30" />
      <circle cx="992" cy="547" r="10" />
      <circle cx="1128" cy="512" r="10" />
    </Doodles>
    <Doodles at="180 360" scale=".3954 .3333" paths={UPPER_MIDDLE} />
    <Doodles at="0 360" scale=".5102 .3333" paths={UPPER_LEFT} />
    <Doodles at="0 0" scale=".4847 .3333" paths={TOP_LEFT} />
    <Doodles at="0 520" scale=".3333 .7653" paths={LEFT_EDGE} />
    <Doodles at="0 1660" scale=".3333" paths={BOTTOM_LEFT} />
    <Doodles at="360 1560" scale=".5893 .3333" paths={BOTTOM_MIDDLE} />
    <g fontSize="80">
      <text transform="translate(1001 199) rotate(26)">B</text>
      <text transform="translate(1042 231) rotate(26)">F</text>
      <text transform="translate(1080 266) rotate(28)">F</text>
    </g>
    <text transform="translate(629 1834) rotate(8)" fontSize="104" style={{ fontFamily: '"Noto Sans CJK SC", sans-serif' }}>文</text>
    <text transform="translate(713 1868) rotate(8)" fontSize="92">A</text>
  </WallpaperSvg>
);

export default function App() {
  return (
    <Screen>
      <GlobalStyle />
      <Wallpaper />
      <Thread>
        <Message w={642} h={88.5} gap={-15}>
          Hey respected <Name>De Wit</Name>
          <FirstStamp>10</FirstStamp>
        </Message>
        <Message
          w={974.5}
          h={143}
          gap={9.5}
          ls={-0.07}
          time="10:40 AM"
          lines={["I’m ready to make payment now with usdt as", "you guided"]}
        />
        <Message w={974.5} h={138} gap={10} ls={-0.22} time="10:41 AM" tail>
          Please confirm so I can send your wallet now
        </Message>
        <Message out w={420} h={88.5} gap={35} ls={-0.3} time="10:48 AM" tail>
          Proceed
        </Message>
        <PhotoRow>
          <PhotoCard>
            <Amount>−486 USDT</Amount>
            <Fiat>$485</Fiat>
            <Panel $h={256.5} $after={40}>
              <Row><Label>Date</Label><DateValue>Dec 30, 2023 at 8:32 PM</DateValue></Row>
              <Row><Label $ls={0.5}>Status <InfoIcon /></Label><Value $ls={0.65}>Completed</Value></Row>
              <Row><Label $ls={0.75}>Recipient</Label><Address><span>T</span><span>R</span></Address></Row>
            </Panel>
            <Panel $h={107} $after={54}>
              <Row><Label $ls={0.7}>Network fee <InfoIcon /></Label><Value>0 TRX ($0.00)</Value></Row>
            </Panel>
            <ExplorerLink>
              <DashedOutline width="765" height="89" fill="none" stroke="#e4e4e8" strokeWidth="1.6" strokeDasharray="8 8">
                <rect x="1" y="1" width="763" height="87" rx="15" />
              </DashedOutline>
              View on block explorer
            </ExplorerLink>
            <Flag />
            <PhotoShade>11:08 AM</PhotoShade>
          </PhotoCard>
          <ForwardButton aria-label="Forward">
            <svg width="96" height="96" viewBox="1140 832 288 288">
              <path
                fill="#dde4ee"
                d="M1282 920Q1283 908 1293 912Q1300 916 1345 960Q1356 971 1346 982L1298 1028Q1284 1037 1282 1022V998C1255 998 1238 1003 1228 1026Q1220 1036 1215 1025C1212 975 1235 945 1282 943Z"
              />
            </svg>
          </ForwardButton>
        </PhotoRow>
        <Message w={432} h={88.5} gap={9} ls={-0.2} time="11:08 AM" tail>
          Confirm sir
        </Message>
        <Message out w={386} h={88.5} gap={35} />
      </Thread>
      <DayPill>Today</DayPill>
      <ScrollThumb />
      <BottomBar />
    </Screen>
  );
}
